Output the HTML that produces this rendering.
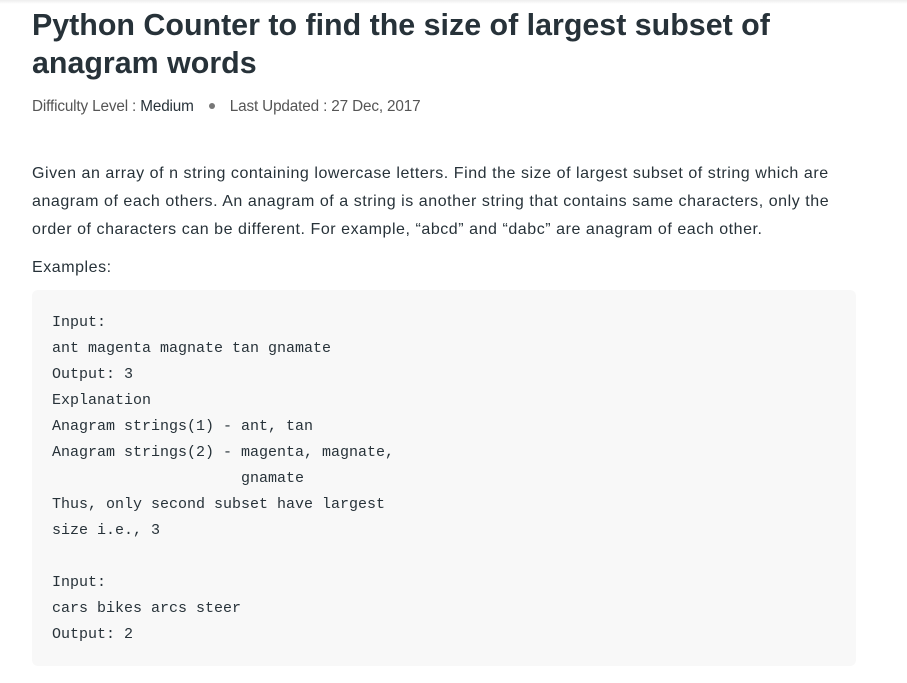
<!DOCTYPE html>
<html><head><style>
body{margin:0;background:#fff;width:907px;height:683px;overflow:hidden;font-family:"Liberation Sans",sans-serif;color:#273239}
.top{position:absolute;left:0;top:0;width:907px;height:4px;background:linear-gradient(#eee,#fff)}
h1{position:absolute;left:32px;top:6px;margin:0;font-size:30.4px;line-height:38px;font-weight:600;width:820px;letter-spacing:0}
.meta{position:absolute;left:32px;top:98px;font-size:15.3px;color:#555;letter-spacing:-0.15px}
.meta b{font-weight:normal;color:#273239}
.dot{display:inline-block;width:6px;height:6px;border-radius:50%;background:#777;margin:0 15px 2px 15px;vertical-align:middle}
p{position:absolute;left:32px;margin:0;font-size:16px;line-height:28px;width:870px;color:#273239;white-space:nowrap;letter-spacing:0.55px}
pre{position:absolute;left:32px;top:290px;width:824px;height:376px;margin:0;background:#f8f8f8;border-radius:6px;box-sizing:border-box;padding:20px 20px;font-family:"Liberation Mono",monospace;font-size:15px;line-height:26px;color:#273239}
</style></head><body>
<div class="top"></div>
<h1>Python Counter to find the size of largest subset of anagram words</h1>
<div class="meta">Difficulty Level : <b>Medium</b><span class="dot"></span>Last Updated : 27 Dec, 2017</div>
<p style="top:160px">Given an array of n string containing lowercase letters. Find the size of largest subset of string which are<br>anagram of each others. An anagram of a string is another string that contains same characters, only the<br>order of characters can be different. For example, “abcd” and “dabc” are anagram of each other.</p>
<p style="top:254px">Examples:</p>
<pre>Input:
ant magenta magnate tan gnamate
Output: 3
Explanation
Anagram strings(1) - ant, tan
Anagram strings(2) - magenta, magnate,
                     gnamate
Thus, only second subset have largest
size i.e., 3

Input:
cars bikes arcs steer
Output: 2</pre>
</body></html>
